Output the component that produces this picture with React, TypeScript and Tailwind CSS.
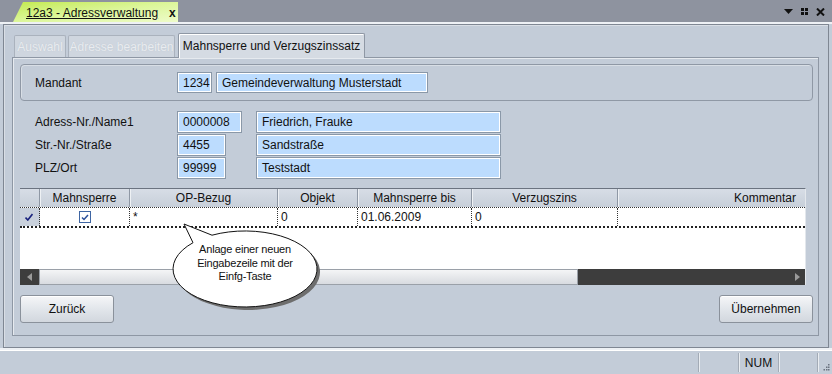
import React from 'react';

function Field({ value, className = '' }: { value: string; className?: string }) {
  return (
    <div
      className={`h-full flex items-center pl-[5px] border border-[#8a98a8] bg-[#bcdcfe] shadow-[inset_1px_1px_0_#ffffff,inset_-1px_-1px_0_#ffffff] ${className}`}
    >
      {value}
    </div>
  );
}

function Btn({ label }: { label: string }) {
  return (
    <button
      type="button"
      className="w-[94px] h-[28px] rounded-[3px] border border-[#8a919b] bg-gradient-to-b from-[#f5f6f8] via-[#e2e6eb] to-[#d2d7de] shadow-[inset_0_1px_0_#ffffff] text-[12px] text-[#111]"
    >
      {label}
    </button>
  );
}

// tail + ellipse outline of the hint bubble, centre (245,269), radii 72/38
const bubble = 'M193 242.7 L184 224 L212 235.2 A72 38 0 1 1 193 242.7 Z';

export default function App() {
  return (
    <div className="relative w-[832px] h-[374px] overflow-hidden bg-[#c3ccd8] text-[12px] text-[#111] font-['Liberation_Sans',Arial,sans-serif] flex flex-col">
      {/* document tab bar */}
      <div className="h-[22px] shrink-0 bg-[#8e939f] flex items-end justify-between">
        <div className="ml-[13px] h-[20px] w-[165px] flex items-center bg-gradient-to-br from-[#c3ea4c] via-[#dcf69a] to-[#eefbc9] [clip-path:polygon(10px_0,100%_0,100%_100%,0_100%)]">
          <span className="ml-[13px] mt-[1px] underline leading-none">12a3 - Adressverwaltung</span>
          <span className="ml-[11px] mt-[1px] font-bold leading-none">x</span>
        </div>
        <div className="self-center flex items-center gap-[8px] mr-[7px] mt-[1px]">
          <svg width="9" height="5" viewBox="0 0 9 5">
            <path d="M0 0h9L4.5 5z" fill="#111" />
          </svg>
          <svg width="7" height="7" viewBox="0 0 7 7" fill="#111">
            <rect x="0" y="0" width="3" height="3" />
            <rect x="4" y="0" width="3" height="3" />
            <rect x="0" y="4" width="3" height="3" />
            <rect x="4" y="4" width="3" height="3" />
          </svg>
          <svg width="9" height="8" viewBox="0 0 9 8">
            <path d="M1 0.5l7 7M8 0.5l-7 7" stroke="#111" strokeWidth="2" />
          </svg>
        </div>
      </div>

      {/* window frame */}
      <div className="h-[328px] shrink-0 flex flex-col border-t-2 border-[#eef1f5]">
        <div className="flex-1 mx-[3px] border-l border-t border-r border-b border-[#7f8793] shadow-[inset_1px_1px_0_#d9dee5] pt-[8px] pl-[8px] pr-[9px] flex flex-col">
          {/* tabs */}
          <div className="h-[24px] flex items-end">
            <div className="ml-[2px] w-[52px] h-[22px] border border-b-0 border-[#aab2bd] rounded-t-[2px] bg-[#cfd6df] flex items-center justify-center text-[#e9ecf0] [text-shadow:0_0_1px_#b8c0ca]">
              Auswahl
            </div>
            <div className="ml-[2px] w-[107px] h-[22px] border border-b-0 border-[#aab2bd] rounded-t-[2px] bg-[#cfd6df] flex items-center justify-center text-[#e9ecf0] [text-shadow:0_0_1px_#b8c0ca]">
              Adresse bearbeiten
            </div>
            <div className="relative z-10 -mb-px ml-[3px] w-[187px] h-[25px] border border-b-0 border-[#8e97a4] rounded-t-[2px] bg-[#d5dbe3] shadow-[inset_1px_1px_0_#ffffff] flex items-center justify-center">
              Mahnsperre und Verzugszinssatz
            </div>
          </div>

          {/* tab panel */}
          <div className="h-[279px] border border-[#8e97a4] bg-[#c3ccd8] shadow-[inset_1px_1px_0_#e6eaef] pt-[6px] pl-[7px] flex flex-col">
            <div className="w-[793px] h-[37px] border border-[#8f98a5] rounded-[4px] shadow-[inset_1px_1px_0_#d8dee5] flex items-center pl-[14px]">
              <div className="w-[142px]">Mandant</div>
              <div className="h-[21px] flex gap-[4px]">
                <Field value="1234" className="w-[35px]" />
                <Field value="Gemeindeverwaltung Musterstadt" className="w-[212px]" />
              </div>
            </div>

            <div className="mt-[10px] flex flex-col gap-px">
              {[
                { label: 'Adress-Nr./Name1', nr: '0000008', nw: 'w-[65px]', name: 'Friedrich, Frauke' },
                { label: 'Str.-Nr./Straße', nr: '4455', nw: 'w-[49px]', name: 'Sandstraße' },
                { label: 'PLZ/Ort', nr: '99999', nw: 'w-[49px]', name: 'Teststadt' },
              ].map(r => (
                <div key={r.label} className="h-[22px] flex items-stretch">
                  <div className="w-[157px] pl-[15px] flex items-center">{r.label}</div>
                  <div className="w-[79px]">
                    <Field value={r.nr} className={r.nw} />
                  </div>
                  <Field value={r.name} className="w-[245px]" />
                </div>
              ))}
            </div>

            {/* grid */}
            <div className="mt-[9px] w-[786px] h-[97px] flex flex-col bg-white border-t border-[#6b7380] border-r border-r-[#e3e7ec]">
              <div className="h-[18px] flex bg-gradient-to-b from-[#d7dde6] to-[#c7cfd9]">
                <div className="w-[20px] border-r border-[#8f98a5]" />
                <div className="w-[90px] border-r border-[#8f98a5] shadow-[inset_1px_0_0_#eef1f4] flex items-center justify-center">Mahnsperre</div>
                <div className="w-[148px] border-r border-[#8f98a5] shadow-[inset_1px_0_0_#eef1f4] flex items-center justify-center">OP-Bezug</div>
                <div className="w-[80px] border-r border-[#8f98a5] shadow-[inset_1px_0_0_#eef1f4] flex items-center justify-center">Objekt</div>
                <div className="w-[114px] border-r border-[#8f98a5] shadow-[inset_1px_0_0_#eef1f4] flex items-center justify-center">Mahnsperre bis</div>
                <div className="w-[146px] border-r border-[#8f98a5] shadow-[inset_1px_0_0_#eef1f4] flex items-center justify-center">Verzugszins</div>
                <div className="flex-1 shadow-[inset_1px_0_0_#eef1f4] flex items-center justify-end pr-[9px]">Kommentar</div>
              </div>
              <div className="h-[21px] flex border-t border-b-2 border-dotted border-[#333] border-b-[#222]">
                <div className="w-[20px] bg-[#c9d1dc] border-r border-dotted border-[#333] flex items-center pl-[5px]">
                  <svg width="8" height="8" viewBox="0 0 8 8">
                    <path d="M0.5 4.5l2.3 2.5L7.5 1" stroke="#1a237e" strokeWidth="1.6" fill="none" />
                  </svg>
                </div>
                <div className="w-[90px] border-r border-dotted border-[#333] flex items-center justify-center">
                  <div className="w-[12px] h-[12px] border border-[#3f66a3] bg-white flex items-center justify-center">
                    <svg width="8" height="7" viewBox="0 0 8 7">
                      <path d="M1 3.5l2 2L7 1" stroke="#2a4f9a" strokeWidth="1.5" fill="none" />
                    </svg>
                  </div>
                </div>
                <div className="w-[148px] border-r border-dotted border-[#333] pl-[3px] flex items-center">*</div>
                <div className="w-[80px] border-r border-dotted border-[#333] pl-[3px] flex items-center">0</div>
                <div className="w-[114px] border-r border-dotted border-[#333] pl-[3px] flex items-center">01.06.2009</div>
                <div className="w-[146px] border-r border-dotted border-[#333] pl-[3px] flex items-center">0</div>
                <div className="flex-1" />
              </div>
              <div className="flex-1" />
              <div className="h-[16px] flex bg-[#3d3d3d]">
                <div className="w-[19px] flex items-center justify-center">
                  <svg width="5" height="8" viewBox="0 0 5 8">
                    <path d="M5 0v8L0 4z" fill="#9a9a9a" />
                  </svg>
                </div>
                <div className="w-[539px] border border-[#9aa0a8] bg-gradient-to-b from-[#f4f5f6] to-[#d8dbe0]" />
                <div className="flex-1 flex items-center justify-end pr-[5px]">
                  <svg width="5" height="8" viewBox="0 0 5 8">
                    <path d="M0 0v8l5-4z" fill="#9a9a9a" />
                  </svg>
                </div>
              </div>
            </div>

            <div className="mt-[10px] w-[793px] flex justify-between">
              <Btn label="Zurück" />
              <Btn label="Übernehmen" />
            </div>
          </div>
        </div>
        <div className="h-[2px] bg-[#eef1f5]" />
      </div>

      {/* status bar */}
      <div className="flex-1 flex border-t border-[#ffffff]">
        <div className="flex-1" />
        <div className="w-[40px] my-[2px] border-l border-[#a3abb6] shadow-[inset_1px_0_0_#e9edf1]" />
        <div className="w-[40px] my-[2px] border-l border-[#a3abb6] shadow-[inset_1px_0_0_#e9edf1] flex items-center justify-center">NUM</div>
        <div className="w-[39px] my-[2px] border-l border-[#a3abb6] shadow-[inset_1px_0_0_#e9edf1]" />
        <div className="w-[15px] my-[2px] border-l border-[#a3abb6] shadow-[inset_1px_0_0_#e9edf1] flex items-end justify-end pr-[2px] pb-[1px]">
          <svg width="7" height="7" viewBox="0 0 7 7" fill="#6b7380">
            <rect x="5" y="0" width="1.5" height="1.5" />
            <rect x="3" y="2.5" width="1.5" height="1.5" />
            <rect x="5" y="2.5" width="1.5" height="1.5" />
            <rect x="0.5" y="5" width="1.5" height="1.5" />
            <rect x="3" y="5" width="1.5" height="1.5" />
            <rect x="5" y="5" width="1.5" height="1.5" />
          </svg>
        </div>
      </div>

      {/* callout bubble over the grid */}
      <svg className="absolute left-0 top-0 pointer-events-none" width="832" height="374" viewBox="0 0 832 374">
        <path d={bubble} fill="#6e6e6e" transform="translate(3 3)" />
        <path d={bubble} fill="#ffffff" stroke="#111" strokeWidth="1" />
      </svg>
      <div className="absolute left-[173px] top-[243px] w-[144px] text-center text-[11px] leading-[13.5px] text-[#111] tracking-[-0.2px] pointer-events-none">
        Anlage einer neuen
        <br />
        Eingabezeile mit der
        <br />
        Einfg-Taste
      </div>
    </div>
  );
}
